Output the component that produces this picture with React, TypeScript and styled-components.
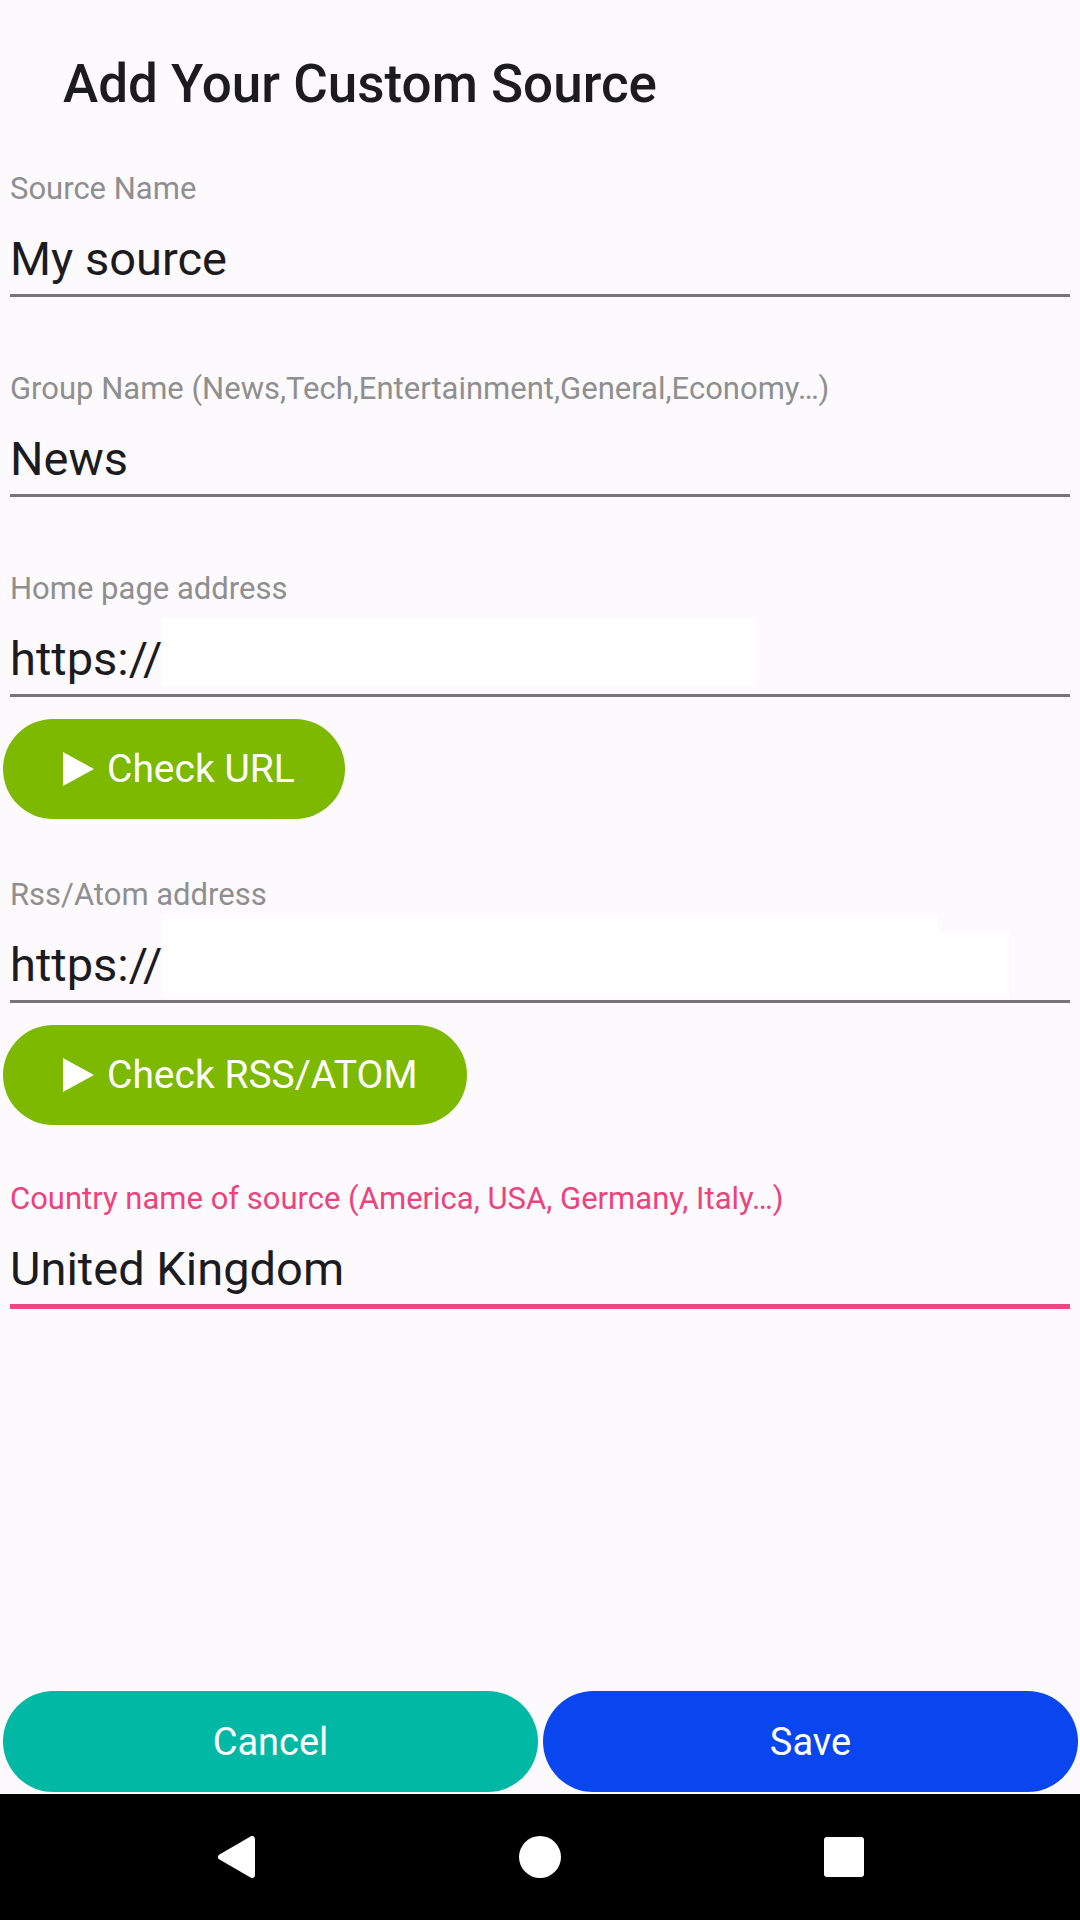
import styled, { createGlobalStyle } from "styled-components";

const GlobalStyle = createGlobalStyle`
  html, body {
    margin: 0;
    padding: 0;
    background: #fcfafd;
  }
  * {
    box-sizing: border-box;
  }
`;

const fields = [
  { label: "Source Name", value: "My source" },
  {
    label: "Group Name (News,Tech,Entertainment,General,Economy\u2026)",
    value: "News",
  },
];

const PlayIcon = () => (
  <svg width="31" height="34" viewBox="0 0 31 34">
    <polygon points="0,0 31,17 0,34" fill="#ffffff" />
  </svg>
);

const App = () => {
  return (
    <Page>
      <GlobalStyle />
      <Title>Add Your Custom Source</Title>

      <Form>
        {fields.map((f, index) => (
          <Field key={index}>
            <Label>{f.label}</Label>
            <InputRow>{f.value}</InputRow>
          </Field>
        ))}

        <Field $tight>
          <Label>Home page address</Label>
          <InputRow>
            https://
            <Blank $w={594} $h={68} $up={14} $down={0} />
          </InputRow>
        </Field>
        <CheckButton $after={58}>
          <PlayIcon />
          Check URL
        </CheckButton>

        <Field $tight>
          <Label>Rss/Atom address</Label>
          <InputRow>
            https://
            <Blank $w={847} $h={82} $up={23} $down={5} $notch={775} />
          </InputRow>
        </Field>
        <CheckButton $after={56}>
          <PlayIcon />
          Check RSS/ATOM
        </CheckButton>

        <Field $focused>
          <Label $focused>
            Country name of source (America, USA, Germany, Italy&hellip;)
          </Label>
          <InputRow $focused>United Kingdom</InputRow>
        </Field>
      </Form>

      <ActionRow>
        <ActionButton $bg="#00b8a3">Cancel</ActionButton>
        <ActionButton $bg="#0a46ef">Save</ActionButton>
      </ActionRow>

      <NavBar>
        <NavSlot>
          <svg width="38" height="42" viewBox="0 0 38 42">
            <polygon
              points="35,3 35,39 4,21"
              fill="#fff"
              stroke="#fff"
              strokeWidth="6"
              strokeLinejoin="round"
            />
          </svg>
        </NavSlot>
        <NavSlot>
          <svg width="42" height="42" viewBox="0 0 42 42">
            <circle cx="21" cy="21" r="21" fill="#fff" />
          </svg>
        </NavSlot>
        <NavSlot>
          <svg width="40" height="40" viewBox="0 0 40 40">
            <rect x="0" y="0" width="40" height="40" rx="3" fill="#fff" />
          </svg>
        </NavSlot>
      </NavBar>
    </Page>
  );
};

export default App;

const Page = styled.div`
  width: 1080px;
  height: 1920px;
  display: flex;
  flex-direction: column;
  background: #fcfafd;
  font-family: Roboto, "Noto Sans", Arial, sans-serif;
  overflow: hidden;
`;

const Title = styled.h1`
  margin: 0;
  padding: 54px 0 0 63px;
  font-size: 53px;
  line-height: 61px;
  font-weight: 500;
  color: #1c1b1f;
`;

const Form = styled.div`
  flex: 1;
  display: flex;
  flex-direction: column;
  padding: 56px 10px 0;
`;

const Field = styled.div<{ $tight?: boolean; $focused?: boolean }>`
  display: flex;
  flex-direction: column;
  margin-bottom: ${(p) => (p.$tight ? "22px" : "74px")};
`;

const Label = styled.div<{ $focused?: boolean }>`
  font-size: 31px;
  line-height: 36px;
  margin-bottom: 25px;
  color: ${(p) => (p.$focused ? "#ef417c" : "#8f8f8f")};
  white-space: nowrap;
`;

const InputRow = styled.div<{ $focused?: boolean }>`
  display: flex;
  align-items: flex-end;
  font-size: 47px;
  line-height: 54px;
  color: #1c1b1f;
  padding-bottom: 8px;
  border-bottom: ${(p) => (p.$focused ? "5px solid #f2447e" : "3px solid #767676")};
`;

const Blank = styled.span<{
  $w: number;
  $h: number;
  $up: number;
  $down: number;
  $notch?: number;
}>`
  display: block;
  flex: none;
  width: ${(p) => p.$w}px;
  height: ${(p) => p.$h}px;
  margin-top: -${(p) => p.$up}px;
  margin-bottom: -${(p) => p.$down}px;
  background: #ffffff;
  ${(p) =>
    p.$notch
      ? `clip-path: polygon(0 0, ${p.$notch}px 0, ${p.$notch}px 17px, 100% 17px, 100% 100%, 0 100%);`
      : ""}
`;

const CheckButton = styled.button<{ $after: number }>`
  align-self: flex-start;
  display: inline-flex;
  align-items: center;
  gap: 13px;
  height: 100px;
  margin: 0 0 ${(p) => p.$after}px -7px;
  padding: 0 50px 0 60px;
  border: none;
  border-radius: 50px;
  background: #7cb900;
  color: #ffffff;
  font-family: Roboto, "Noto Sans", Arial, sans-serif;
  font-size: 39px;
  white-space: nowrap;
`;

const ActionRow = styled.div`
  display: flex;
  gap: 5px;
  padding: 0 2px 0 3px;
  margin-bottom: 2px;
`;

const ActionButton = styled.button<{ $bg: string }>`
  flex: 1;
  height: 101px;
  border: none;
  border-radius: 51px;
  background: ${(p) => p.$bg};
  color: #ffffff;
  font-family: Roboto, "Noto Sans", Arial, sans-serif;
  font-size: 38px;
`;

const NavBar = styled.div`
  height: 126px;
  background: #000000;
  display: flex;
  justify-content: center;
  align-items: center;
`;

const NavSlot = styled.div`
  width: 304px;
  display: flex;
  justify-content: center;
  align-items: center;
`;
